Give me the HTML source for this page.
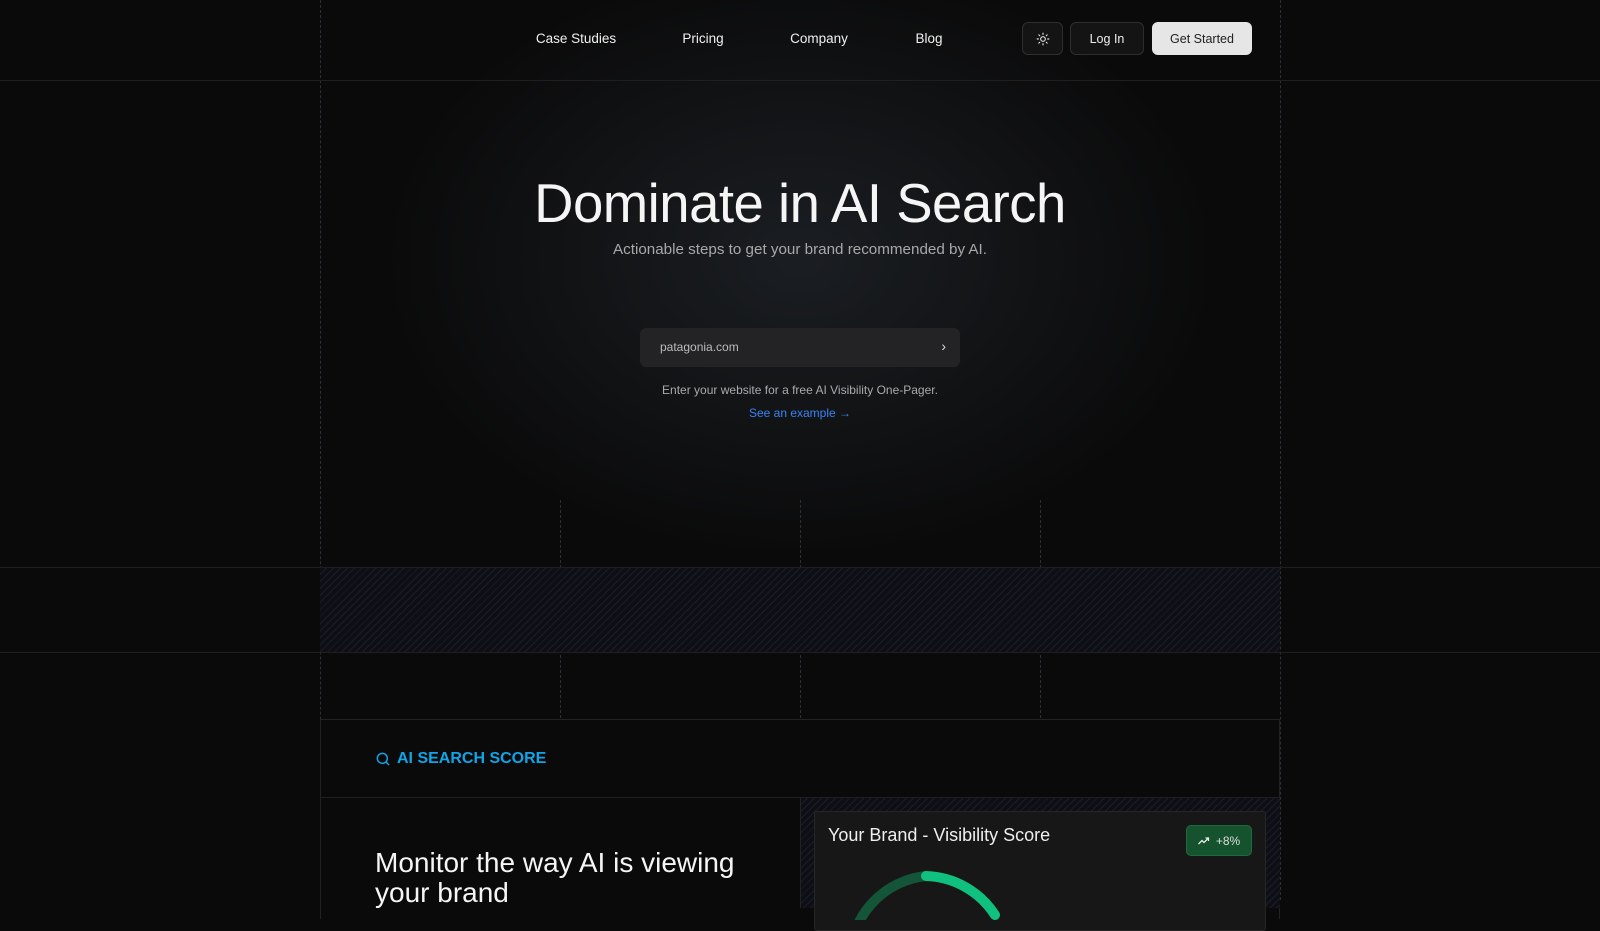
<!DOCTYPE html>
<html><head><meta charset="utf-8"><style>
*{box-sizing:border-box;margin:0;padding:0}
body{width:1600px;height:900px;overflow:hidden;background:#0a0a0a;font-family:"Liberation Sans",Arial,sans-serif;color:#fff;position:relative}
.abs{position:absolute}
.glow{left:300px;top:0;width:1000px;height:600px;background:radial-gradient(ellipse 420px 300px at 500px 260px,rgba(40,46,54,.55),rgba(10,10,10,0) 100%)}
.vl{position:absolute;top:0;width:0;border-left:1px dashed #2a2f3a}
.hl{position:absolute;left:0;width:1600px;height:1px;background:#1f1f1f}
.nav a{position:absolute;top:31px;font-size:13.5px;color:#f0f0f0;transform:translateX(-50%)}
.btn{position:absolute;top:22px;height:33px;border-radius:6px;border:1px solid #2e2e2e;background:#141414;font-size:12.5px;display:flex;align-items:center;justify-content:center;color:#eee}
.stripes{left:320px;top:568px;width:960px;height:84px;background:repeating-linear-gradient(135deg,#0d0f14 0 4px,#1a1e2a 4px 5px)}
</style></head><body>
<div class="abs glow"></div>
<div class="vl" style="left:320px;height:900px"></div>
<div class="vl" style="left:1280px;height:900px"></div>
<div class="vl" style="left:560px;top:500px;height:218px"></div>
<div class="vl" style="left:800px;top:500px;height:218px"></div>
<div class="vl" style="left:1040px;top:500px;height:218px"></div>
<div class="hl" style="top:80px"></div>
<div class="abs stripes"></div>
<div class="hl" style="top:567px"></div>
<div class="hl" style="top:652px"></div>
<div class="nav">
<a style="left:576px">Case Studies</a><a style="left:703px">Pricing</a><a style="left:819px">Company</a><a style="left:929px">Blog</a>
</div>
<div class="btn" style="left:1022px;width:41px"><svg width="14" height="14" viewBox="0 0 24 24" fill="none" stroke="#ddd" stroke-width="2" stroke-linecap="round"><circle cx="12" cy="12" r="4"/><path d="M12 2v2M12 20v2M4.9 4.9l1.4 1.4M17.7 17.7l1.4 1.4M2 12h2M20 12h2M4.9 19.1l1.4-1.4M17.7 6.3l1.4-1.4"/></svg></div>
<div class="btn" style="left:1070px;width:74px">Log In</div>
<div class="btn" style="left:1152px;width:100px;background:#e6e6e6;color:#222;border-color:#e6e6e6">Get Started</div>
<div class="abs" style="left:0;width:1600px;top:172px;text-align:center;font-size:54.5px;letter-spacing:-0.5px;color:#f5f5f5">Dominate in AI Search</div>
<div class="abs" style="left:0;width:1600px;top:241px;text-align:center;font-size:15.2px;color:#a8a8a8">Actionable steps to get your brand recommended by AI.</div>
<div class="abs" style="left:640px;top:328px;width:320px;height:39px;background:#232325;border-radius:6px;font-size:12px;color:#bbb;padding:12px 0 0 20px">patagonia.com<span style="position:absolute;right:14px;top:10px;font-size:14px;color:#ddd">›</span></div>
<div class="abs" style="left:0;width:1600px;top:383px;text-align:center;font-size:12px;color:#aaa">Enter your website for a free AI Visibility One-Pager.</div>
<div class="abs" style="left:0;width:1600px;top:406px;text-align:center;font-size:12px;color:#3b82f6">See an example →</div>
<div class="abs" style="left:320px;top:719px;width:960px;height:200px;border-top:1px solid #222;border-left:1px solid #222;border-right:1px solid #222"></div>
<div class="hl" style="top:797px;left:320px;width:960px"></div>
<div class="abs" style="left:375px;top:750px;font-size:16px;font-weight:bold;color:#0ea5e9;display:flex;align-items:center;gap:6px"><svg width="16" height="16" viewBox="0 0 24 24" fill="none" stroke="#0ea5e9" stroke-width="2.2"><circle cx="11" cy="11" r="7.5"/><path d="M16.5 16.5L21 21"/></svg>AI SEARCH SCORE</div>
<div class="abs" style="left:375px;top:848px;font-size:28px;line-height:30px;color:#f5f5f5">Monitor the way AI is viewing<br>your brand</div>
<div class="abs" style="left:800px;top:798px;width:480px;height:110px;border-left:1px solid #222;background:repeating-linear-gradient(135deg,#0d0f14 0 4px,#1a1e2a 4px 5px)"></div>
<div class="abs" style="left:814px;top:811px;width:452px;height:120px;background:#171717;border:1px solid #262626;border-radius:3px"></div>
<div class="abs" style="left:828px;top:825px;font-size:18px;color:#eee">Your Brand - Visibility Score</div>
<div class="abs" style="left:1186px;top:825px;width:66px;height:31px;background:#14532d;border:1px solid #1e6b3c;border-radius:5px;font-size:12px;color:#ddd;display:flex;align-items:center;justify-content:center;gap:6px"><svg width="12" height="10" viewBox="0 0 24 20" fill="none" stroke="#eee" stroke-width="2.5"><path d="M1 16l7-7 4 4 9-9M15 4h6v6"/></svg>+8%</div>
<svg class="abs" style="left:830px;top:860px" width="200" height="60"><path d="M20 95 A85 85 0 0 1 96 16" fill="none" stroke="#14553a" stroke-width="10" stroke-linecap="round"/><path d="M96 16 A85 85 0 0 1 165 55" fill="none" stroke="#10c07f" stroke-width="10" stroke-linecap="round"/></svg>
</body></html>
